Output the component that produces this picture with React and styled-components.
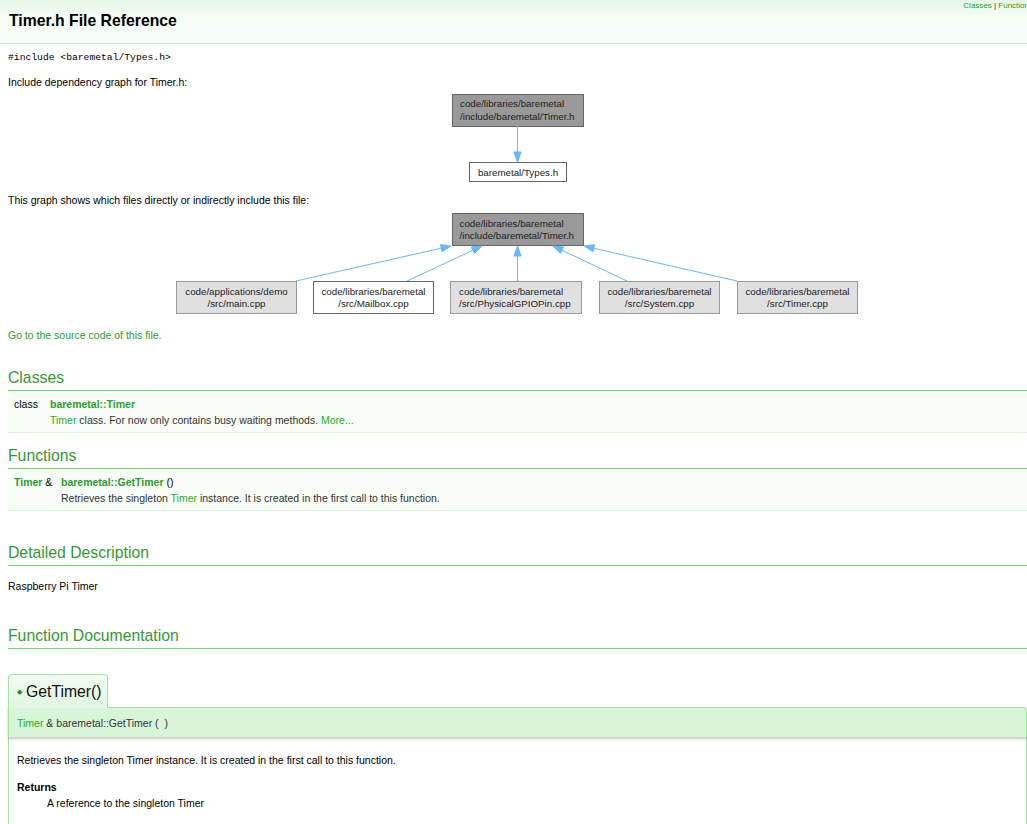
import React from "react";
import styled, { createGlobalStyle } from "styled-components";

const Global = createGlobalStyle`
  html, body { margin: 0; padding: 0; background: #fff; overflow: hidden; }
  body {
    font-family: "Liberation Sans", Arial, sans-serif;
    font-size: 10.5px;
    color: #000;
  }
`;

const Header = styled.div`
  display: flex;
  justify-content: space-between;
  align-items: flex-start;
  height: 43px;
  border-bottom: 1px solid #c4eec4;
  background: linear-gradient(#e6f7e6 0%, #f4fcf4 35%, #f7fdf7 100%);
`;

const Title = styled.div`
  padding-left: 9px;
  font-size: 15.75px;
  font-weight: bold;
  line-height: 41px;
  color: #000;
`;

const Summary = styled.div`
  font-size: 8px;
  line-height: 10px;
  padding-top: 1px;
  margin-right: -6px;
  white-space: nowrap;
  color: #333;
`;

const Link = styled.a`
  color: ${(p) => (p.$bright ? "#22b022" : "#2c9e2c")};
  font-weight: ${(p) => (p.$bold ? "bold" : "normal")};
  text-decoration: none;
`;

const Contents = styled.div`
  padding-left: 8px;
`;

const IncludeLine = styled.div`
  margin-top: 8px;
  font-family: "Liberation Mono", "Courier New", monospace;
  font-size: 9.7px;
  line-height: 12px;
`;

const Para = styled.div`
  margin-top: ${(p) => p.$mt || 0}px;
  line-height: 16px;
`;

const Graph = styled.svg`
  display: block;
  margin-top: ${(p) => p.$mt || 0}px;
`;

const GroupHeader = styled.h2`
  margin: ${(p) => p.$mt || 0}px 0 0 0;
  padding-bottom: 2px;
  font-size: 15.75px;
  font-weight: normal;
  line-height: 20px;
  color: #329a32;
  border-bottom: 1px solid #6bdc6b;
`;

const MemRow = styled.div`
  display: grid;
  grid-template-columns: ${(p) => p.$left}px 1fr;
  padding: 5px 0 4px 6px;
  background: #f8fdf7;
  border-bottom: 1px solid #dcf6dc;
  line-height: 16px;
`;

const MemLeft = styled.div`
  white-space: nowrap;
`;

const MemDesc = styled.div`
  grid-column: 2;
  color: #333;
`;

const MemItem = styled.div`
  margin-top: 25px;
`;

const MemTitle = styled.div`
  display: inline-flex;
  align-items: center;
  gap: 4px;
  height: 34px;
  padding: 0 6px 0 8px;
  box-sizing: border-box;
  width: 100px;
  border: 1px solid #a6e2a6;
  border-bottom: none;
  border-radius: 4px 4px 0 0;
  background: linear-gradient(#f2fcf2, #dff6df);
  font-size: 15.75px;
  color: #111;
  position: relative;
  z-index: 1;
`;

const Diamond = styled.span`
  font-size: 7px;
  color: #2a8a2a;
  line-height: 1;
`;

const MemProto = styled.div`
  height: 29px;
  padding-left: 8px;
  display: flex;
  align-items: center;
  margin-top: -1px;
  background: #d9f5d9;
  border: 1px solid #a6e2a6;
  border-bottom: none;
  border-top-right-radius: 4px;
  box-shadow: 0 2px 3px rgba(0, 0, 0, 0.22);
  color: #333;
  position: relative;
`;

const MemDoc = styled.div`
  padding: 15px 10px 20px 8px;
  border: 1px solid #a6e2a6;
  border-top: none;
  line-height: 16px;
  color: #000;
`;

const DocPara = styled.div`
  margin-bottom: 11px;
`;

const SectionTitle = styled.div`
  font-weight: bold;
`;

const SectionBody = styled.div`
  padding-left: 30px;
`;

const EDGE = "#63b8ff";
const FONT = '"Liberation Sans", Arial, sans-serif';

function Arrow({ x1, y1, x2, y2 }) {
  const dx = x2 - x1;
  const dy = y2 - y1;
  const len = Math.hypot(dx, dy);
  const ux = dx / len;
  const uy = dy / len;
  const bx = x2 - ux * 10;
  const by = y2 - uy * 10;
  const px = -uy * 3.6;
  const py = ux * 3.6;
  return (
    <g>
      <line x1={x1} y1={y1} x2={bx} y2={by} stroke={EDGE} strokeWidth="1" />
      <polygon
        points={`${x2},${y2} ${bx + px},${by + py} ${bx - px},${by - py}`}
        fill={EDGE}
        stroke={EDGE}
        strokeWidth="1"
      />
    </g>
  );
}

function Node({ x, y, w, h, kind, lines, anchor = "middle", tx, baselines }) {
  const fills = { root: "#999999", gray: "#e0e0e0", white: "#ffffff" };
  const strokes = { root: "#666666", gray: "#999999", white: "#666666" };
  const textX = tx !== undefined ? tx : x + w / 2;
  return (
    <g>
      <rect
        x={x + 0.5}
        y={y + 0.5}
        width={w - 1}
        height={h - 1}
        fill={fills[kind]}
        stroke={strokes[kind]}
      />
      {lines.map((l, i) => (
        <text
          key={i}
          x={textX}
          y={baselines[i]}
          textAnchor={anchor}
          fontFamily={FONT}
          fontSize="9.75"
          fill="#222"
        >
          {l}
        </text>
      ))}
    </g>
  );
}

// graph coordinates: page x - 8
function IncludeGraph() {
  return (
    <Graph width="1019" height="100" $mt={0}>
      <Node
        x={444}
        y={4}
        w={132}
        h={33}
        kind="root"
        anchor="start"
        tx={452}
        lines={["code/libraries/baremetal", "/include/baremetal/Timer.h"]}
        baselines={[17, 29.5]}
      />
      <Arrow x1={509.5} y1={36} x2={509.5} y2={72} />
      <Node
        x={461}
        y={72}
        w={98}
        h={20}
        kind="white"
        lines={["baremetal/Types.h"]}
        baselines={[85.5]}
      />
    </Graph>
  );
}

function IncludedByGraph() {
  const by = [86.5, 98.5];
  return (
    <Graph width="1019" height="110" $mt={0}>
      <Node
        x={444}
        y={5}
        w={132}
        h={33}
        kind="root"
        anchor="start"
        tx={451.5}
        lines={["code/libraries/baremetal", "/include/baremetal/Timer.h"]}
        baselines={[18.5, 30.5]}
      />
      <Arrow x1={288} y1={73} x2={443} y2={38} />
      <Arrow x1={399} y1={73} x2={474} y2={38} />
      <Arrow x1={509.5} y1={73} x2={509.5} y2={38} />
      <Arrow x1={619} y1={73} x2={545} y2={38} />
      <Arrow x1={729} y1={73} x2={576} y2={38} />
      <Node
        x={168}
        y={73}
        w={121}
        h={33}
        kind="gray"
        lines={["code/applications/demo", "/src/main.cpp"]}
        baselines={by}
      />
      <Node
        x={305}
        y={73}
        w={121}
        h={33}
        kind="white"
        lines={["code/libraries/baremetal", "/src/Mailbox.cpp"]}
        baselines={by}
      />
      <Node
        x={442}
        y={73}
        w={132}
        h={33}
        kind="gray"
        anchor="start"
        tx={451}
        lines={["code/libraries/baremetal", "/src/PhysicalGPIOPin.cpp"]}
        baselines={by}
      />
      <Node
        x={591}
        y={73}
        w={121}
        h={33}
        kind="gray"
        lines={["code/libraries/baremetal", "/src/System.cpp"]}
        baselines={by}
      />
      <Node
        x={729}
        y={73}
        w={121}
        h={33}
        kind="gray"
        lines={["code/libraries/baremetal", "/src/Timer.cpp"]}
        baselines={by}
      />
    </Graph>
  );
}

export default function App() {
  return (
    <>
      <Global />
      <Header>
        <Title>Timer.h File Reference</Title>
        <Summary>
          <Link href="#classes">Classes</Link> | <Link href="#func-members">Functions</Link>
        </Summary>
      </Header>
      <Contents>
        <IncludeLine>#include &lt;baremetal/Types.h&gt;</IncludeLine>
        <Para $mt={10}>Include dependency graph for Timer.h:</Para>
        <IncludeGraph />
        <Para $mt={2}>This graph shows which files directly or indirectly include this file:</Para>
        <IncludedByGraph />
        <Para $mt={9}>
          <Link href="#src">Go to the source code of this file.</Link>
        </Para>

        <GroupHeader $mt={25}>Classes</GroupHeader>
        <MemRow $left={36}>
          <MemLeft>class </MemLeft>
          <div>
            <Link $bold href="#timer">baremetal::Timer</Link>
          </div>
          <MemDesc>
            <Link $bright href="#timer">Timer</Link> class. For now only contains busy waiting methods.{" "}
            <Link $bright href="#timer">More...</Link>
          </MemDesc>
        </MemRow>

        <GroupHeader $mt={13}>Functions</GroupHeader>
        <MemRow $left={47}>
          <MemLeft>
            <Link $bold href="#timer">Timer</Link> &amp;
          </MemLeft>
          <div>
            <Link $bold href="#gettimer">baremetal::GetTimer</Link> ()
          </div>
          <MemDesc>
            Retrieves the singleton <Link $bright href="#timer">Timer</Link> instance. It is created in the first
            call to this function.
          </MemDesc>
        </MemRow>

        <GroupHeader $mt={32}>Detailed Description</GroupHeader>
        <Para $mt={12}>Raspberry Pi Timer</Para>

        <GroupHeader $mt={32}>Function Documentation</GroupHeader>
        <MemItem>
          <MemTitle>
            <Diamond>◆</Diamond>GetTimer()
          </MemTitle>
          <MemProto>
            <Link $bright href="#timer">Timer</Link>&nbsp;&amp; baremetal::GetTimer (&nbsp;&nbsp;)
          </MemProto>
          <MemDoc>
            <DocPara>Retrieves the singleton Timer instance. It is created in the first call to this function.</DocPara>
            <SectionTitle>Returns</SectionTitle>
            <SectionBody>A reference to the singleton Timer</SectionBody>
          </MemDoc>
        </MemItem>
      </Contents>
    </>
  );
}
